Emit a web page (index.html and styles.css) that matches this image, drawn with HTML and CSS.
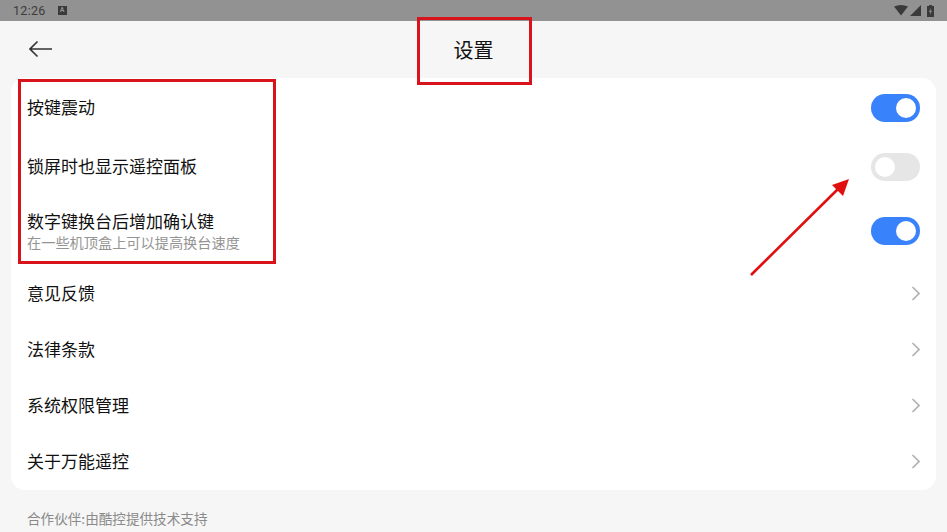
FILE: index.html
```html
<!DOCTYPE html>
<html lang="zh-CN">
<head>
    <meta charset="UTF-8">
    <meta name="viewport" content="width=device-width, initial-scale=1.0">
    <title>设置</title>
    <link rel="stylesheet" href="styles.css">
</head>
<body>
    <div class="status-bar">
        <div class="status-left">
            <span class="clock">12:26</span>
            <span class="status-badge">A</span>
        </div>
        <div class="status-right">
            <svg width="14" height="11" viewBox="0 0 14 11"><path d="M0 1.5 Q7 -1.5 14 1.5 L7 10.5 Z" fill="#3a3a3a"/></svg>
            <svg width="11" height="11" viewBox="0 0 11 11"><path d="M11 0 V11 H0 Z" fill="#3a3a3a"/></svg>
            <svg class="battery" width="7" height="12" viewBox="0 0 7 12"><path d="M2 0 H5 V1 H7 V12 H0 V1 H2 Z" fill="#3a3a3a"/><path d="M4 3 L2 7 H3.4 L3 10 L5 5.8 H3.6 Z" fill="#929292"/></svg>
        </div>
    </div>
    <header class="top-bar">
        <svg class="back" width="24" height="18" viewBox="0 0 24 18"><path d="M23 9 H1 M8.5 1.5 L1 9 L8.5 16.5" fill="none" stroke="#333" stroke-width="1.6"/></svg>
        <h1>设置</h1>
    </header>
    <div class="card">
        <div class="row row-switch">
            <span class="row-title">按键震动</span>
            <span class="switch on"></span>
        </div>
        <div class="row row-switch">
            <span class="row-title">锁屏时也显示遥控面板</span>
            <span class="switch"></span>
        </div>
        <div class="row row-tall">
            <div class="row-text">
                <span class="row-title">数字键换台后增加确认键</span>
                <span class="row-sub">在一些机顶盒上可以提高换台速度</span>
            </div>
            <span class="switch on"></span>
        </div>
        <div class="row">
            <span class="row-title">意见反馈</span>
            <svg class="chevron" width="9" height="15" viewBox="0 0 9 15"><path d="M1.5 1 L8 7.5 L1.5 14" fill="none" stroke="#b0b0b0" stroke-width="1.6"/></svg>
        </div>
        <div class="row">
            <span class="row-title">法律条款</span>
            <svg class="chevron" width="9" height="15" viewBox="0 0 9 15"><path d="M1.5 1 L8 7.5 L1.5 14" fill="none" stroke="#b0b0b0" stroke-width="1.6"/></svg>
        </div>
        <div class="row">
            <span class="row-title">系统权限管理</span>
            <svg class="chevron" width="9" height="15" viewBox="0 0 9 15"><path d="M1.5 1 L8 7.5 L1.5 14" fill="none" stroke="#b0b0b0" stroke-width="1.6"/></svg>
        </div>
        <div class="row">
            <span class="row-title">关于万能遥控</span>
            <svg class="chevron" width="9" height="15" viewBox="0 0 9 15"><path d="M1.5 1 L8 7.5 L1.5 14" fill="none" stroke="#b0b0b0" stroke-width="1.6"/></svg>
        </div>
    </div>
    <p class="partner">合作伙伴:由酷控提供技术支持</p>

    <!-- annotations drawn over the screenshot -->
    <div class="mark mark-title"></div>
    <div class="mark mark-rows"></div>
    <svg class="mark-arrow" width="110" height="105" viewBox="0 0 110 105">
        <path d="M6 100 L93 14" fill="none" stroke="#e01010" stroke-width="2.6"/>
        <path d="M104 4 L98 21 L87 10 Z" fill="#e01010"/>
    </svg>
</body>
</html>
```

FILE: styles.css
```css
html, body {
    margin: 0;
    padding: 0;
}
body {
    position: relative;
    width: 947px;
    height: 532px;
    overflow: hidden;
    background: #f6f6f6;
    color: #111;
    font-family: "Noto Sans CJK SC", "Roboto", sans-serif;
}
.status-bar {
    display: flex;
    justify-content: space-between;
    align-items: center;
    height: 21px;
    padding: 0 13px;
    background: #929292;
}
.status-left, .status-right {
    display: flex;
    align-items: center;
}
.status-right {
    gap: 2px;
}
.clock {
    font-family: "Roboto", sans-serif;
    font-size: 12.5px;
    color: #3c3c3c;
    letter-spacing: 0.3px;
}
.status-badge {
    width: 9px;
    height: 9px;
    margin-left: 12px;
    background: #3a3a3a;
    color: #929292;
    font-family: "Roboto", sans-serif;
    font-size: 7px;
    font-weight: bold;
    line-height: 9px;
    text-align: center;
}
.battery {
    margin-left: 4px;
}
.top-bar {
    position: relative;
    display: flex;
    justify-content: center;
    align-items: center;
    height: 57px;
}
.top-bar h1 {
    margin: 0;
    font-size: 20px;
    font-weight: normal;
    color: #111;
}
.back {
    position: absolute;
    left: 29px;
    top: 19px;
}
.card {
    margin: 0 11px;
    padding-bottom: 1px;
    background: #fff;
    border-radius: 14px;
}
.row {
    display: flex;
    justify-content: space-between;
    align-items: center;
    height: 56px;
    padding: 0 16px;
}
.row-switch {
    height: 59px;
}
.row-switch .row-title {
    margin-bottom: 2px;
}
.row-tall {
    height: 69px;
}
.row-text {
    display: flex;
    flex-direction: column;
}
.row-title {
    font-size: 17px;
    line-height: 24px;
}
.row-tall .row-title {
    line-height: 22px;
    margin-bottom: 1px;
}
.row-sub {
    font-size: 14.2px;
    line-height: 18px;
    color: #949494;
}
.switch {
    position: relative;
    width: 49px;
    height: 28px;
    border-radius: 14px;
    background: #e6e6e6;
}
.switch::after {
    content: "";
    position: absolute;
    top: 4px;
    left: 4px;
    width: 20px;
    height: 20px;
    border-radius: 50%;
    background: #fff;
}
.switch.on {
    background: #3882fc;
}
.switch.on::after {
    left: 25px;
}
.partner {
    margin: 18px 0 0 27px;
    font-size: 13.6px;
    line-height: 20px;
    color: #8a8a8a;
}
.mark {
    position: absolute;
    border: 3px solid #d8131b;
    box-sizing: border-box;
}
.mark-title {
    left: 417px;
    top: 17px;
    width: 115px;
    height: 68px;
}
.mark-rows {
    left: 18px;
    top: 79px;
    width: 258px;
    height: 185px;
}
.mark-arrow {
    position: absolute;
    left: 745px;
    top: 175px;
}
```
